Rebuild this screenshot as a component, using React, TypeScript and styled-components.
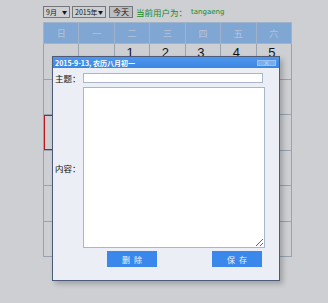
import React from 'react'
import styled, { createGlobalStyle } from 'styled-components'

const GlobalStyle = createGlobalStyle`
  html, body {
    margin: 0;
    padding: 0;
    background: #ffffff;
  }
  body {
    font-family: "Noto Sans CJK SC", "Noto Sans", sans-serif;
  }
`

const Page = styled.div`
  position: relative;
  width: 328px;
  height: 303px;
  overflow: hidden;
  background: #ffffff;
  padding: 5px 0 0 43px;
  box-sizing: border-box;
`

const Toolbar = styled.div`
  display: flex;
  align-items: center;
  gap: 2px;
  height: 13px;
  white-space: nowrap;
`

const SelectBox = styled.div<{ width: number }>`
  display: flex;
  align-items: center;
  justify-content: space-between;
  width: ${(p) => p.width}px;
  height: 12px;
  box-sizing: border-box;
  border: 1px solid #8f8f8f;
  background: #ffffff;
  padding: 0 2px 0 2px;
  font-size: 7px;
  line-height: 10px;
  color: #111;
  white-space: nowrap;
`

const Arrow = styled.span`
  font-size: 5px;
  color: #111;
`

const TodayButton = styled.button`
  height: 12px;
  padding: 0 3px;
  margin-left: 1px;
  border: 1px solid #8f8f8f;
  background: #e8e8e8;
  font-family: inherit;
  font-size: 8px;
  line-height: 9px;
  color: #111;
`

const UserLabel = styled.span`
  margin-left: 1px;
  font-size: 8.5px;
  color: #22a81c;
`

const UserName = styled.span`
  margin-left: 2px;
  font-size: 7px;
  color: #22a81c;
  font-family: "DejaVu Sans", sans-serif;
`

const Calendar = styled.table`
  margin-top: 4px;
  width: 249px;
  table-layout: fixed;
  border-collapse: collapse;
`

const HeadCell = styled.th`
  height: 20px;
  padding: 0;
  background: #9ecbff;
  border: 1px solid #c8dcf5;
  color: #e4efff;
  font-size: 9px;
  font-weight: normal;
`

const DayRow = styled.tr`
  height: 35.5px;
`

const DayCell = styled.td<{ today?: boolean }>`
  padding: 2px 4px 0 0;
  vertical-align: top;
  text-align: center;
  border: 1px solid #bcc6d4;
  background: #ffffff;
  font-family: "Liberation Sans", sans-serif;
  font-size: 13px;
  line-height: 13px;
  color: #111;
  outline: ${(p) => (p.today ? '1px solid #e81a1a' : 'none')};
  outline-offset: -1px;
`

const Mask = styled.div`
  position: absolute;
  inset: 0;
  background: rgba(20, 28, 45, 0.21);
`

const Dialog = styled.div`
  position: absolute;
  left: 52px;
  top: 56px;
  width: 228px;
  height: 225px;
  box-sizing: border-box;
  border: 1px solid #4d5b78;
  background: #ebeef5;
  box-shadow: 3px 3px 5px rgba(0, 0, 0, 0.22);
  display: flex;
  flex-direction: column;
`

const TitleBar = styled.div`
  height: 11px;
  display: flex;
  align-items: center;
  justify-content: space-between;
  padding: 0 3px 0 2px;
  background: linear-gradient(#4f97ec, #3b86e4);
`

const Title = styled.span`
  font-size: 7px;
  font-weight: bold;
  color: #ffffff;
  line-height: 10px;
`

const CloseButton = styled.span`
  width: 19px;
  height: 6px;
  box-sizing: border-box;
  border: 1px solid #9cc3f3;
  background: #78aeee;
  color: #d9e9fc;
  font-size: 6px;
  line-height: 4px;
  text-align: center;
`

const Form = styled.div`
  display: grid;
  grid-template-columns: 30px 182px;
  row-gap: 3px;
  padding-top: 4px;
  align-items: center;
`

const Label = styled.label`
  padding-left: 2px;
  font-size: 8.5px;
  color: #111;
  white-space: nowrap;
`

const TextInput = styled.input`
  display: block;
  width: 180px;
  height: 10px;
  box-sizing: border-box;
  border: 1px solid #a9b6ca;
  background: #ffffff;
  padding: 0;
  margin: 0;
`

const TextArea = styled.textarea`
  display: block;
  width: 182px;
  height: 161px;
  box-sizing: border-box;
  border: 1px solid #a9b6ca;
  background: #ffffff;
  padding: 0;
  margin: 0;
`

const Actions = styled.div`
  grid-column: 2;
  display: flex;
  justify-content: space-between;
  padding: 0 3px 0 24px;
`

const ActionButton = styled.button`
  width: 50px;
  height: 16px;
  border: none;
  background: #3a88ec;
  color: #eaf3ff;
  font-family: inherit;
  font-size: 8px;
  letter-spacing: 4px;
  padding: 0 0 0 4px;
`

const heads = ['日', '一', '二', '三', '四', '五', '六']

function buildWeeks(): (number | null)[][] {
  const cells: (number | null)[] = []
  for (let i = 0; i < 2; i++) cells.push(null)
  for (let d = 1; d <= 30; d++) cells.push(d)
  while (cells.length < 42) cells.push(null)
  const weeks: (number | null)[][] = []
  for (let i = 0; i < 42; i += 7) weeks.push(cells.slice(i, i + 7))
  return weeks
}

export default function App(): JSX.Element {
  const weeks = buildWeeks()
  return (
    <>
      <GlobalStyle />
      <Page>
        <Toolbar>
          <SelectBox width={27}>
            9月<Arrow>▼</Arrow>
          </SelectBox>
          <SelectBox width={34}>
            2015年<Arrow>▼</Arrow>
          </SelectBox>
          <TodayButton>今天</TodayButton>
          <UserLabel>当前用户为：</UserLabel>
          <UserName>tangaeng</UserName>
        </Toolbar>
        <Calendar>
          <thead>
            <tr>
              {heads.map((h) => (
                <HeadCell key={h}>{h}</HeadCell>
              ))}
            </tr>
          </thead>
          <tbody>
            {weeks.map((week, wi) => (
              <DayRow key={wi}>
                {week.map((d, di) => (
                  <DayCell key={di} today={d === 13}>
                    {d ?? ''}
                  </DayCell>
                ))}
              </DayRow>
            ))}
          </tbody>
        </Calendar>
        <Mask />
        <Dialog>
          <TitleBar>
            <Title>2015-9-13, 农历八月初一</Title>
            <CloseButton>×</CloseButton>
          </TitleBar>
          <Form>
            <Label>主题：</Label>
            <TextInput />
            <Label>内容：</Label>
            <TextArea />
            <Actions>
              <ActionButton>删除</ActionButton>
              <ActionButton>保存</ActionButton>
            </Actions>
          </Form>
        </Dialog>
      </Page>
    </>
  )
}
